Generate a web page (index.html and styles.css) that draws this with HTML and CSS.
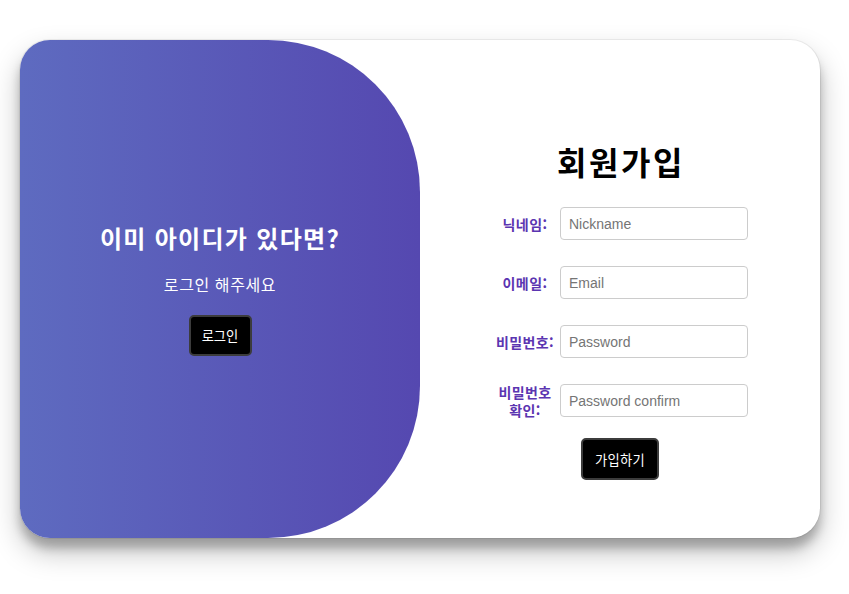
FILE: index.html
```html
<!DOCTYPE html>
<html lang="ko">
<head>
<meta charset="utf-8">
<title>회원가입</title>
<link rel="stylesheet" href="styles.css">
</head>
<body>
<div class="page">
  <div class="card">
    <section class="overlay">
      <h2 class="overlay-title">이미 아이디가 있다면?</h2>
      <p class="overlay-text">로그인 해주세요</p>
      <button class="btn btn-login" type="button">로그인</button>
    </section>
    <section class="signup">
      <h1 class="signup-title">회원가입</h1>
      <form class="form">
        <div class="row">
          <label class="label" for="nick">닉네임:</label>
          <input class="input" id="nick" type="text" placeholder="Nickname">
        </div>
        <div class="row">
          <label class="label" for="email">이메일:</label>
          <input class="input" id="email" type="email" placeholder="Email">
        </div>
        <div class="row">
          <label class="label" for="pw">비밀번호:</label>
          <input class="input" id="pw" type="password" placeholder="Password">
        </div>
        <div class="row">
          <label class="label" for="pw2">비밀번호 확인:</label>
          <input class="input" id="pw2" type="password" placeholder="Password confirm">
        </div>
        <button class="btn btn-signup" type="button">가입하기</button>
      </form>
    </section>
  </div>
</div>
</body>
</html>
```
FILE: styles.css
```css
* { box-sizing: border-box; }
html, body { margin: 0; padding: 0; background: #fff; }
body { font-family: "Noto Sans CJK KR", "Liberation Sans", sans-serif; }
.page { padding: 40px 29px 56px 20px; }
.card {
  width: 800px;
  height: 498px;
  background: #fff;
  border-radius: 30px;
  overflow: hidden;
  display: flex;
  box-shadow: 0 0 0 1px rgba(0,0,0,0.06), 0 14px 28px rgba(0,0,0,0.25), 0 10px 10px rgba(0,0,0,0.22);
}
.overlay {
  width: 400px;
  height: 100%;
  background: linear-gradient(to right, #5e6bc0, #5548b0);
  border-radius: 0 152px 152px 0;
  display: flex;
  flex-direction: column;
  align-items: center;
  justify-content: center;
  color: #fff;
}
.overlay-title {
  margin: 0;
  font-size: 24px;
  line-height: 30px;
  font-weight: 700;
  letter-spacing: 1.3px;
}
.overlay-text {
  margin: 20px 0 0;
  font-size: 16px;
  line-height: 22px;
  letter-spacing: 0.6px;
}
.btn {
  background: #000;
  color: #fff;
  border: 2px solid #3c3c3c;
  border-radius: 5px;
  font-family: "Noto Sans CJK KR", sans-serif;
  font-size: 13.3px;
  padding: 0 8px;
  cursor: pointer;
}
.btn-login { margin-top: 20px; height: 41px; width: 63px; }
.signup {
  flex: 1;
  display: flex;
  flex-direction: column;
  align-items: center;
  padding-top: 101px;
}
.signup-title {
  margin: 0;
  font-size: 32px;
  line-height: 40px;
  font-weight: 700;
  color: #000;
  letter-spacing: 2.5px;
  padding-left: 2px;
}
.form {
  margin-top: 26px;
  display: flex;
  flex-direction: column;
  align-items: center;
  gap: 26px;
}
.row {
  display: flex;
  align-items: center;
  gap: 2px;
  height: 33px;
}
.label {
  width: 66px;
  text-align: center;
  color: #5b35b1;
  font-size: 14px;
  font-weight: 700;
  line-height: 18px;
  letter-spacing: 0.4px;
}
.input {
  width: 188px;
  height: 33px;
  border: 1px solid #cccccc;
  border-radius: 4px;
  padding: 0 8px;
  font-family: "Liberation Sans", Arial, sans-serif;
  font-size: 14px;
  color: #333;
  outline: none;
}
.input::placeholder { color: #757575; }
.btn-signup { margin-top: -5px; height: 42px; width: 78px; letter-spacing: 0.3px; }
```
